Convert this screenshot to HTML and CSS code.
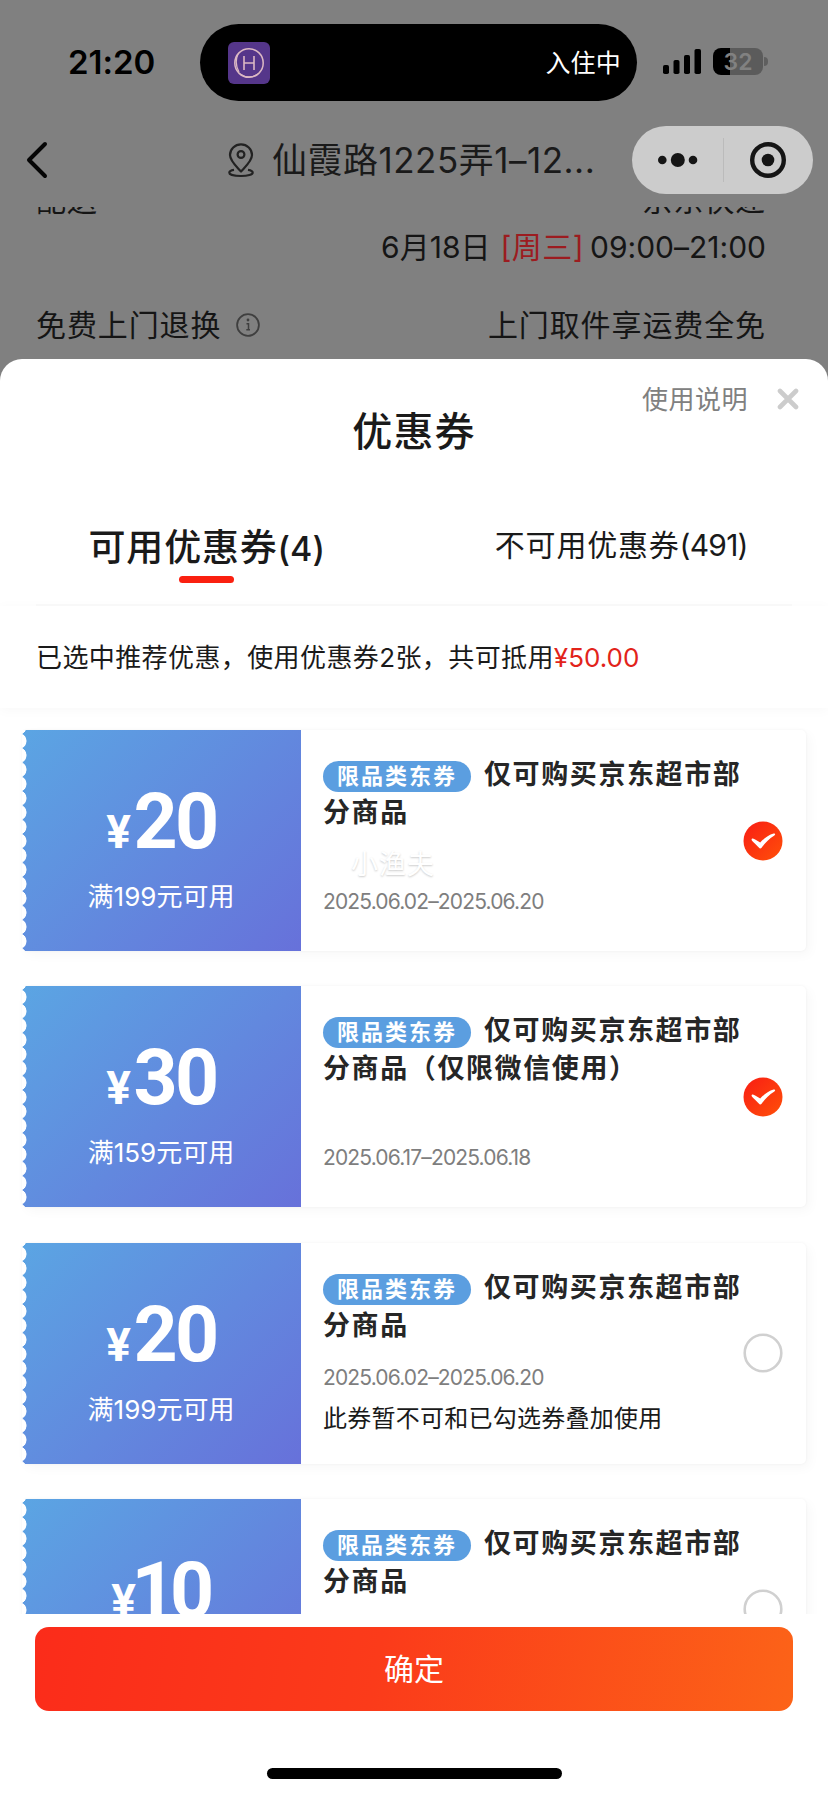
FILE: index.html
```html
<!DOCTYPE html>
<html lang="zh-CN">
<head>
<meta charset="utf-8">
<title>优惠券</title>
<link rel="stylesheet" href="styles.css">
</head>
<body>
<div class="phone">
  <header class="status">
    <div class="time">21:20</div>
    <div class="island">
      <svg class="app" viewBox="0 0 42 42"><rect width="42" height="42" rx="6" fill="#55368a"/><ellipse cx="21" cy="21" rx="14.2" ry="14.3" fill="none" stroke="#dcb9c4" stroke-width="1.5"/><path d="M12 32Q21 38 30 32M10 12Q6 21 11 30" fill="none" stroke="#dcb9c4" stroke-width="1.3"/><path d="M16 14V28M26 14V28M16 21H26" stroke="#dcb9c4" stroke-width="1.6" fill="none"/></svg>
      <span class="live">入住中</span>
    </div>
    <svg class="signal" viewBox="0 0 38 25"><rect y="16" width="6" height="9" rx="1.8"/><rect x="10.5" y="11" width="6" height="14" rx="1.8"/><rect x="21" y="6" width="6" height="19" rx="1.8"/><rect x="31.5" width="6.5" height="25" rx="1.8"/></svg>
    <div class="battery"><span>32</span></div><i class="nub"></i>
  </header>
  <nav class="nav">
    <svg class="back" viewBox="0 0 24 38"><path d="M20 3L4 19L20 35" fill="none" stroke="#050505" stroke-width="4" stroke-linecap="round" stroke-linejoin="round"/></svg>
    <svg class="pin" viewBox="0 0 26 35"><g fill="none" stroke="#222" stroke-width="2.2"><path d="M13 28.5C9 24 2 18 2 12A11 10.7 0 0 1 24 12C24 18 17 24 13 28.5Z" stroke-linejoin="round"/><circle cx="13" cy="11.5" r="3.4"/><path d="M6 26.8C3 27.2 1.3 28.4 1.3 29.7C1.3 31.5 6 33 13 33S24.7 31.5 24.7 29.7C24.7 28.4 23 27.2 20 26.8"/></g></svg>
    <div class="address">仙霞路1225弄1–12...</div>
    <div class="capsule">
      <svg class="dots" viewBox="0 0 40 14"><circle cx="4.3" cy="7" r="4.3"/><circle cx="19.8" cy="7" r="7"/><circle cx="35" cy="7" r="4.3"/></svg>
      <i class="split"></i>
      <svg class="target" viewBox="0 0 36 36"><circle cx="18" cy="18" r="15.8" fill="none" stroke="#151515" stroke-width="4.4"/><circle cx="18" cy="18" r="6.3"/></svg>
    </div>
  </nav>
  <main class="order">
    <div class="cut"><span>配送</span><span>京东快递</span></div>
    <div class="slot"><span class="d">6月18日</span><b>[周三]</b><span class="h">09:00–21:00</span></div>
    <div class="returns"><span>免费上门退换</span><svg class="info" viewBox="0 0 24 24"><circle cx="12" cy="12" r="10.9" fill="none" stroke="#3f3f3f" stroke-width="1.8"/><path d="M10.5 10.7H12.5V16.8M10.3 16.8H14" stroke="#3f3f3f" stroke-width="1.5" fill="none"/><circle cx="12" cy="7" r="1.4" fill="#3f3f3f"/></svg><span class="free">上门取件享运费全免</span></div>
  </main>
  <section class="sheet">
    <div class="sheet-head">
      <h1>优惠券</h1>
      <span class="help">使用说明</span>
      <svg class="close" viewBox="0 0 22 22"><path d="M3 3L19 19M19 3L3 19" stroke="#ccc" stroke-width="4.6" stroke-linecap="round"/></svg>
    </div>
    <div class="tabs">
      <div class="tab active"><span>可用优惠券<span class="count">(4)</span></span></div>
      <div class="tab"><span>不可用优惠券<span class="count">(491)</span></span></div>
    </div>
    <p class="summary"><span>已选中推荐优惠，使用优惠券2张，共可抵用</span><em>¥50.00</em></p>
    <div class="list">
      <article class="coupon">
        <div class="value"><div class="price"><small>¥</small>20</div><div class="rule">满199元可用</div></div>
        <div class="body"><div class="name"><span class="tag">限品类东券</span><span class="l1">仅可购买京东超市部</span><span class="l2">分商品</span></div><div class="mark">小渔夫</div><div class="date">2025.06.02–2025.06.20</div></div>
        <svg class="pick" viewBox="0 0 40 40"><use href="#check"/></svg>
      </article>
      <article class="coupon">
        <div class="value"><div class="price"><small>¥</small>30</div><div class="rule">满159元可用</div></div>
        <div class="body"><div class="name"><span class="tag">限品类东券</span><span class="l1">仅可购买京东超市部</span><span class="l2">分商品（仅限微信使用）</span></div><div class="date">2025.06.17–2025.06.18</div></div>
        <svg class="pick" viewBox="0 0 40 40"><use href="#check"/></svg>
      </article>
      <article class="coupon">
        <div class="value"><div class="price"><small>¥</small>20</div><div class="rule">满199元可用</div></div>
        <div class="body"><div class="name"><span class="tag">限品类东券</span><span class="l1">仅可购买京东超市部</span><span class="l2">分商品</span></div><div class="date early">2025.06.02–2025.06.20</div><div class="note">此券暂不可和已勾选券叠加使用</div></div>
        <svg class="pick" viewBox="0 0 40 40"><use href="#radio"/></svg>
      </article>
      <article class="coupon">
        <div class="value"><div class="price"><small>¥</small><span class="one">1</span>0</div></div>
        <div class="body"><div class="name"><span class="tag">限品类东券</span><span class="l1">仅可购买京东超市部</span><span class="l2">分商品</span></div></div>
        <svg class="pick" viewBox="0 0 40 40"><use href="#radio"/></svg>
      </article>
    </div>
    <footer class="foot"><button class="confirm">确定</button><i class="home"></i></footer>
  </section>
</div>
<svg class="defs" width="0" height="0"><defs>
  <linearGradient id="red" x1="0" y1="0" x2="1" y2="1"><stop offset="0" stop-color="#f91d14"/><stop offset="1" stop-color="#ff5009"/></linearGradient>
  <g id="check"><circle cx="20" cy="20" r="19.5" fill="url(#red)"/><path d="M8.6 18.2C8.9 17 10.6 17.2 17.2 21.6C21 17.5 26 13.2 30.6 12.4C32.4 12.2 32.6 13.6 31.4 14.4C26 17.6 22 22 18.8 26.4C17.8 27.8 16.8 27.8 15.8 26.6C12.5 22.6 8.2 20 8.6 18.2Z" fill="#fff"/></g>
  <circle id="radio" cx="20" cy="20" r="18.3" fill="#fff" stroke="#d0d0d0" stroke-width="2.6"/>
</defs></svg>
</body>
</html>
```
FILE: styles.css
```css
* { box-sizing: border-box; margin: 0; padding: 0; }
body { width: 828px; height: 1796px; overflow: hidden; background: #808080; color: #1a1a1a; font-family: Inter, "Noto Sans CJK SC", sans-serif; font-feature-settings: "calt" 0; }
svg { display: block; flex: none; }
span, b, em, small { white-space: nowrap; }
.phone { height: 1796px; display: flex; flex-direction: column; overflow: hidden; }
.defs { position: absolute; }

.status { height: 125px; flex: none; display: flex; align-items: center; }
.time { width: 200px; padding-left: 68px; font-size: 33px; font-weight: 600; color: #000; line-height: 38px; margin-top: -2px; }
.island { width: 437px; height: 77px; border-radius: 39px; background: #000; color: #fff; display: flex; align-items: center; justify-content: space-between; padding: 0 16px 0 28px; }
.app { width: 42px; height: 42px; }
.live { font-size: 25px; letter-spacing: 0.2px; line-height: 36px; }
.signal { width: 38px; height: 25px; margin-left: 26px; margin-top: -2px; }
.battery { width: 50px; height: 27px; margin: -2px 0 0 12px; border-radius: 8px; background: linear-gradient(90deg, #000 17px, #5b5b5b 17px); color: #818181; font-size: 23px; font-weight: 600; line-height: 28px; text-align: center; }
.nub { width: 4px; height: 9px; margin: -2px 0 0 1px; border-radius: 0 5px 5px 0; background: #5f5f5f; }

.nav { height: 70px; flex: none; display: flex; align-items: center; }
.back { width: 24px; height: 38px; margin-left: 25px; }
.pin { width: 26px; height: 35px; margin-left: 179px; }
.address { width: 360px; margin-left: 18px; font-size: 35px; letter-spacing: 0.5px; line-height: 50px; white-space: nowrap; }
.capsule { width: 181px; height: 68px; border-radius: 34px; background: #ccc; display: flex; align-items: center; fill: #151515; }
.dots { width: 40px; height: 14px; margin-left: 26px; }
.split { width: 1px; height: 44px; margin-left: 25px; background: #bbb; }
.target { width: 36px; height: 36px; margin-left: 26px; }

.order { height: 164px; flex: none; padding: 12px 62px 0 36px; font-size: 30px; line-height: 40px; letter-spacing: 0.9px; color: #151515; }
.cut { height: 8px; overflow: hidden; display: flex; justify-content: space-between; align-items: flex-end; }
.cut span { display: block; margin-bottom: -5px; }
.slot { display: flex; justify-content: flex-end; margin-top: 12px; letter-spacing: 0; white-space: nowrap; }
.slot b { font-weight: 400; color: #9c1c20; margin-left: 10px; letter-spacing: 0.4px; }
.slot .h { margin-left: 6px; }
.returns { display: flex; align-items: center; margin-top: 38px; }
.info { width: 24px; height: 24px; margin-left: 15px; }
.free { margin-left: auto; }

.sheet { flex: 1; background: #fff; border-radius: 22px 22px 0 0; display: flex; flex-direction: column; overflow: hidden; }
.sheet-head { position: relative; height: 151px; flex: none; display: flex; justify-content: center; }
h1 { margin-top: 44px; font-size: 40px; font-weight: 500; line-height: 58px; letter-spacing: 1.2px; }
.help { position: absolute; top: 23px; right: 80px; font-size: 26px; line-height: 36px; letter-spacing: 0.5px; color: #808080; }
.close { position: absolute; top: 29px; right: 29px; width: 22px; height: 22px; }
.tabs { height: 96px; flex: none; margin: 0 36px; display: flex; border-bottom: 2px solid #fafafa; }
.tab { flex: 1; display: flex; flex-direction: column; align-items: center; font-size: 30px; line-height: 44px; letter-spacing: 0.8px; padding-top: 13px; }
.tab:last-child { padding-left: 39px; }
.tab.active { padding: 12px 34px 0 0; font-size: 37px; font-weight: 500; line-height: 52px; }
.tab.active::after { content: ""; width: 55px; height: 7px; border-radius: 4px; background: #fa2010; margin-top: 1px; }
.count { letter-spacing: -0.8px; }
.active .count { font-size: 34px; letter-spacing: 0; }
.summary { height: 102px; flex: none; padding: 31px 36px 0; font-size: 26px; line-height: 42px; letter-spacing: 0.4px; white-space: nowrap; box-shadow: 0 2px 12px #00000008; }
.summary em { font-style: normal; color: #e2231a; letter-spacing: 0; }

.list { height: 906px; flex: none; overflow: hidden; padding: 22px 22px 0; display: flex; flex-direction: column; gap: 35.3px; }
.coupon { height: 221px; flex: none; display: flex; align-items: center; border-radius: 5px; background: #fff; box-shadow: 4px 4px 12px #00000008, 0 0 3px #0000000c; }
.value { width: 279px; height: 221px; color: #fff; background: radial-gradient(circle at -3.4px 7.15px, #fff 7.6px, transparent 8.2px) 0 -10.45px / 6px 14.3px repeat-y, linear-gradient(135deg, #5ba5e3, #6288de 55%, #6771da); display: flex; flex-direction: column; align-items: center; }
.price { margin-top: 48px; font: 700 77px/88px Roboto, sans-serif; letter-spacing: -2.5px; }
.price small { font-size: 46px; margin-right: 5px; }
.one { margin: 0 -3px 0 -7px; }
.rule { margin-top: 2px; padding-right: 1px; font-size: 26px; line-height: 38px; }
.body { width: 445px; height: 221px; padding: 26px 0 0 22px; }
.name { display: flex; flex-wrap: wrap; align-items: center; font-size: 27px; font-weight: 700; line-height: 38px; letter-spacing: 1.6px; color: #262626; }
.tag { width: 148px; height: 31px; margin: 3px 13px 0 0; border-radius: 16px; background: #5b9ee0; color: #fff; font-size: 22px; line-height: 31px; letter-spacing: 2px; text-align: center; }
.l2 { width: 100%; }
.mark { height: 40px; margin: 13px 0 -53px 28px; font-size: 27px; line-height: 40px; letter-spacing: 1px; color: #fff; text-shadow: 0 1px 2px #ccc; }
.date { margin-top: 56px; font-size: 21px; line-height: 28px; color: #7e7e7e; letter-spacing: -0.85px; }
.date.early { margin-top: 19px; }
.note { margin-top: 9px; font-size: 24px; line-height: 36px; letter-spacing: 0.25px; }
.pick { width: 40px; height: 40px; margin-left: -3px; }

.foot { flex: 1; display: flex; flex-direction: column; align-items: center; padding-top: 13px; }
.confirm { width: 758px; height: 84px; border: 0; border-radius: 14px; color: #fff; background: linear-gradient(100deg, #fb2c1a, #fb3b1a 45%, #fc6318); font: 400 30px/84px Inter, "Noto Sans CJK SC", sans-serif; }
.home { width: 295px; height: 11px; margin-top: 57px; border-radius: 6px; background: #000; }
```
